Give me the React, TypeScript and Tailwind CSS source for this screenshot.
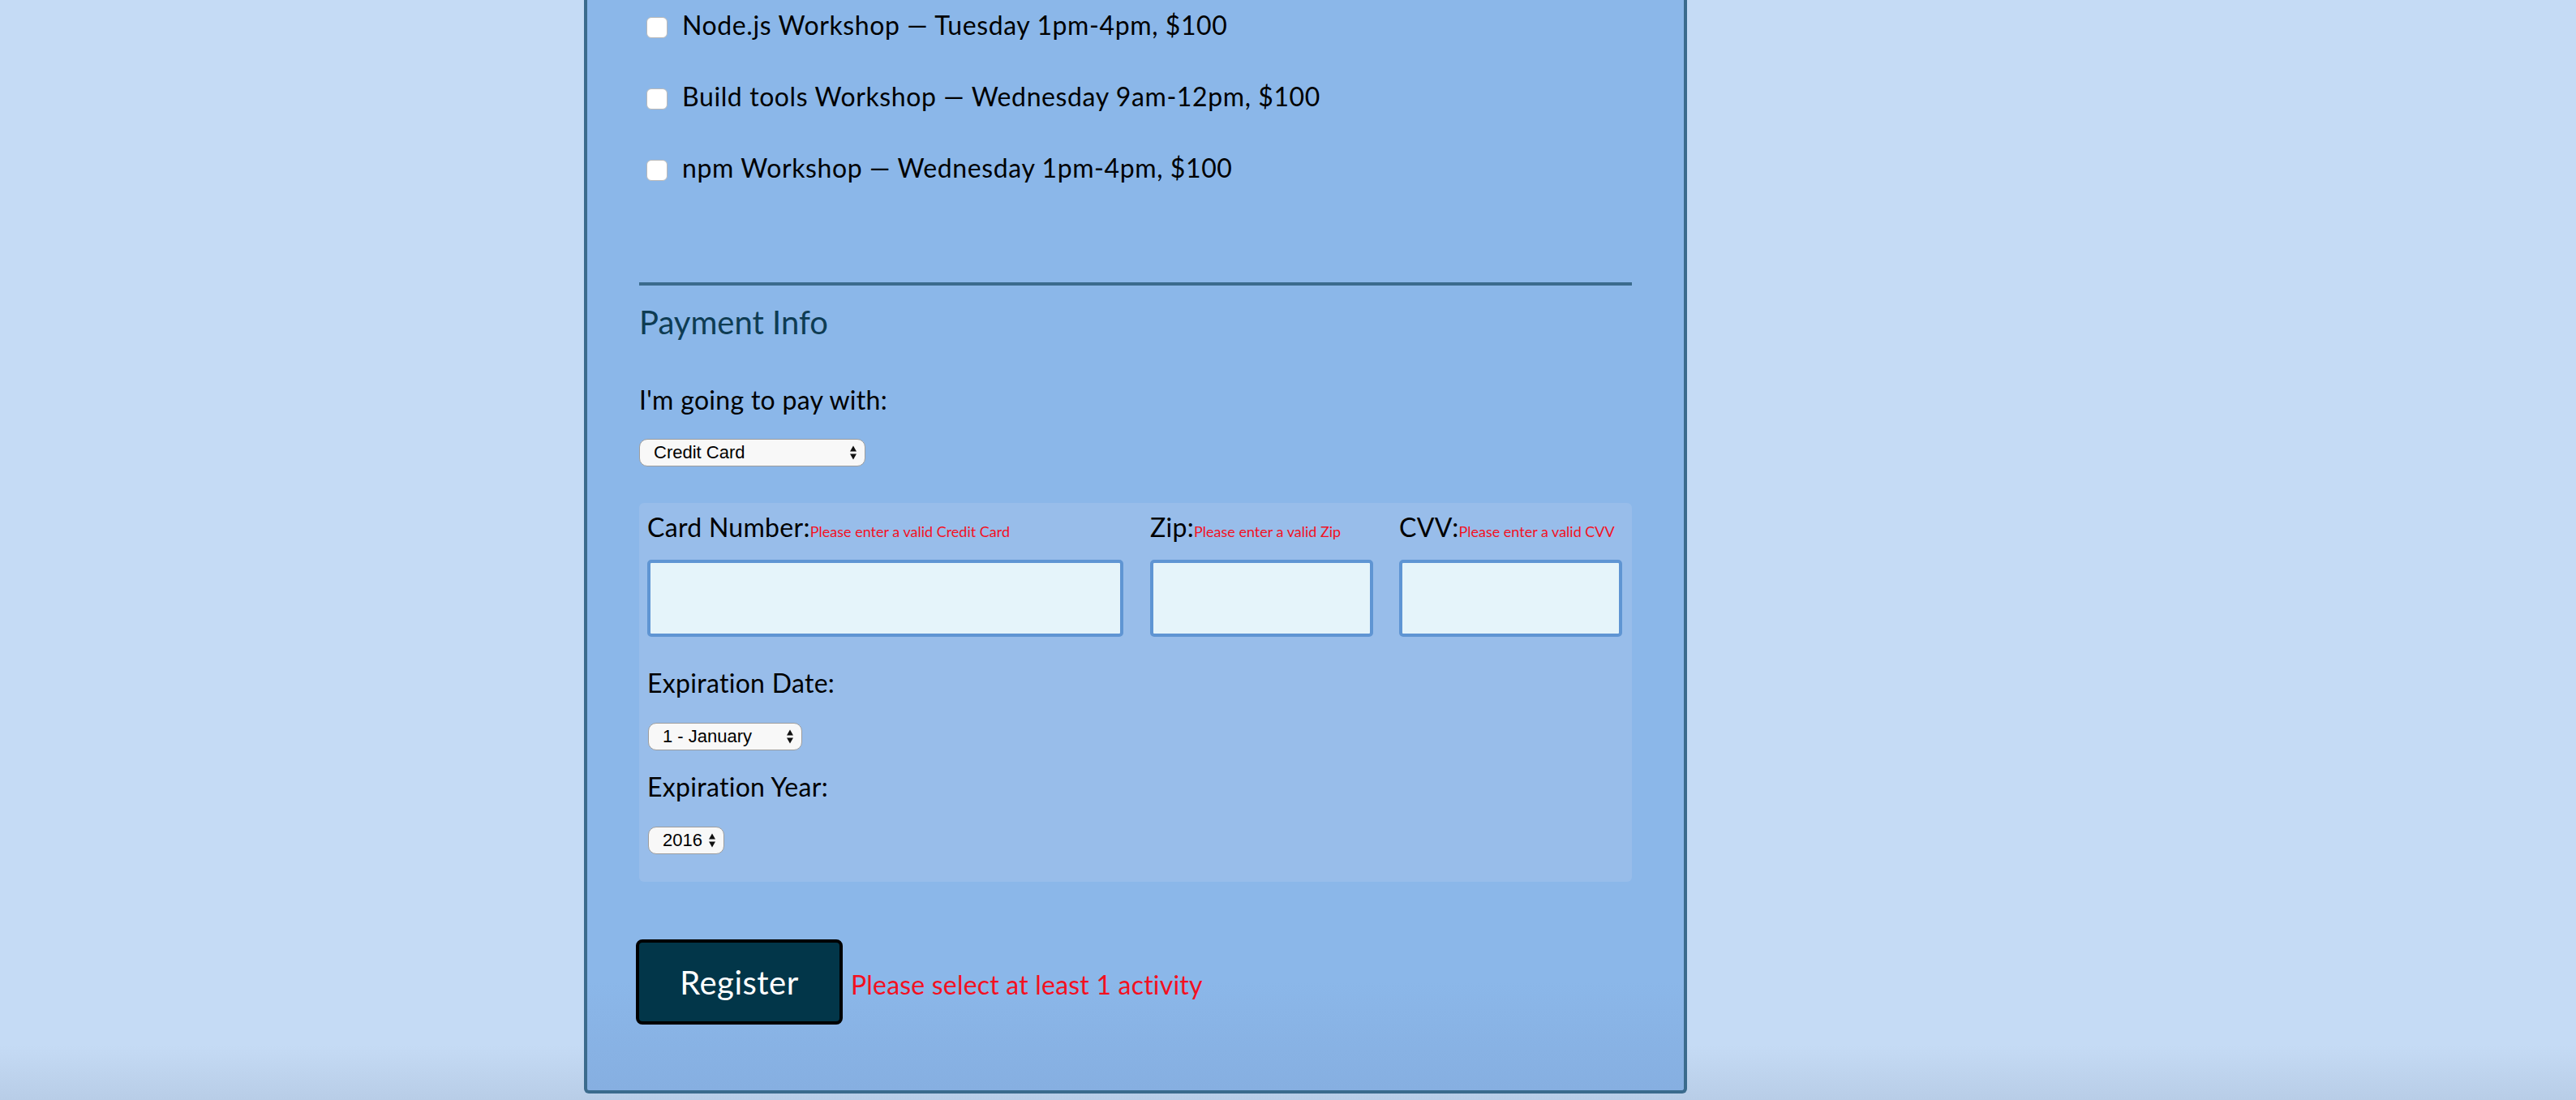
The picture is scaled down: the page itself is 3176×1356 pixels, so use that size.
import React from "react";

function Arrows() {
  return (
    <svg width="10" height="19" viewBox="0 0 10 19" className="absolute top-1/2 -translate-y-1/2 right-[10px] pointer-events-none">
      <path d="M1 8 L5 1 L9 8 Z" fill="#111" />
      <path d="M1 11 L9 11 L5 18 Z" fill="#111" />
    </svg>
  );
}

function FakeSelect({ value, className }: { value: string; className: string }) {
  return (
    <div className={"relative h-[34px] " + className}>
      <select
        defaultValue={value}
        className="appearance-none w-full h-full rounded-[10px] border-[1.5px] border-[#9d9d9d] bg-[#f8f8f8] pl-[17px] pr-[24px] text-[22px] leading-[30px] text-black font-['Liberation_Sans',Arial,sans-serif] outline-none"
      >
        <option>{value}</option>
      </select>
      <Arrows />
    </div>
  );
}

const activities = [
  "Node.js Workshop — Tuesday 1pm-4pm, $100",
  "Build tools Workshop — Wednesday 9am-12pm, $100",
  "npm Workshop — Wednesday 1pm-4pm, $100",
];

export default function App() {
  return (
    <div className="h-[1356px] w-full overflow-hidden bg-[linear-gradient(180deg,#c5dbf5_0%,#c5dbf5_95%,#b8cde7_100%)] font-['Lato',sans-serif] text-black">
      <div className="ml-[720px] w-[1360px] border-x-4 border-b-4 border-[#3b6b8d] rounded-b-[6px] bg-[linear-gradient(180deg,#8bb7e9_0%,#8bb7e9_90%,#86afe1_100%)] px-[64px] pt-[15px] pb-[81px]">
        {/* Activities */}
        <div className="flex flex-col">
          {activities.map((a) => (
            <label key={a} className="flex items-start h-[88px]">
              <input
                type="checkbox"
                className="appearance-none mt-[6px] ml-[9px] w-[26px] h-[26px] rounded-[6px] border border-[#b9b9b9] bg-white shrink-0"
              />
              <span className="ml-[18px] text-[32px] leading-[32px] tracking-[0.6px] whitespace-nowrap">{a}</span>
            </label>
          ))}
        </div>

        <div className="mt-[69px] h-[4px] bg-[#3b6b8d]" />

        {/* Payment */}
        <h2 className="mt-[25px] text-[40px] leading-[40px] text-[#0e3c53]">Payment Info</h2>
        <div className="mt-[60px] text-[32px] leading-[32px] tracking-[0.3px]">I'm going to pay with:</div>
        <FakeSelect value="Credit Card" className="mt-[32px] w-[279px]" />

        <div className="mt-[45px] rounded-[6px] bg-[#98bdea] pl-[10px] pr-[10px] pt-[14px] pb-[34px]">
          <div className="flex">
            <div className="w-[587px]">
              <div className="text-[32px] leading-[32px] tracking-[0.3px] whitespace-nowrap">
                Card Number:<span className="text-[18px] leading-[18px] tracking-normal text-[#f3101f]">Please enter a valid Credit Card</span>
              </div>
              <input className="mt-[24px] block w-[587px] h-[95px] rounded-[5px] border-4 border-[#5f95d3] bg-[#e5f4fa] outline-none" />
            </div>
            <div className="ml-[33px] w-[275px]">
              <div className="text-[32px] leading-[32px] tracking-[0.3px] whitespace-nowrap">
                Zip:<span className="text-[18px] leading-[18px] tracking-normal text-[#f3101f]">Please enter a valid Zip</span>
              </div>
              <input className="mt-[24px] block w-[275px] h-[95px] rounded-[5px] border-4 border-[#5f95d3] bg-[#e5f4fa] outline-none" />
            </div>
            <div className="ml-[32px] w-[275px]">
              <div className="text-[32px] leading-[32px] tracking-[0.3px] whitespace-nowrap">
                CVV:<span className="text-[18px] leading-[18px] tracking-normal text-[#f3101f]">Please enter a valid CVV</span>
              </div>
              <input className="mt-[24px] block w-[275px] h-[95px] rounded-[5px] border-4 border-[#5f95d3] bg-[#e5f4fa] outline-none" />
            </div>
          </div>
          <div className="mt-[41px] text-[32px] leading-[32px] tracking-[0.3px]">Expiration Date:</div>
          <FakeSelect value="1 - January" className="mt-[33px] w-[190px] ml-[1px]" />
          <div className="mt-[29px] text-[32px] leading-[32px] tracking-[0.3px]">Expiration Year:</div>
          <FakeSelect value="2016" className="mt-[33px] w-[94px] ml-[1px]" />
        </div>

        <div className="mt-[71px] -ml-[4px] flex items-baseline gap-[10px]">
          <button className="w-[255px] h-[105px] rounded-[8px] border-4 border-black bg-[#023649] text-white text-[40px] leading-[40px] tracking-[0.5px]">
            Register
          </button>
          <span className="text-[32px] leading-[32px] tracking-[0.2px] text-[#f3101f]">Please select at least 1 activity</span>
        </div>
      </div>
    </div>
  );
}
